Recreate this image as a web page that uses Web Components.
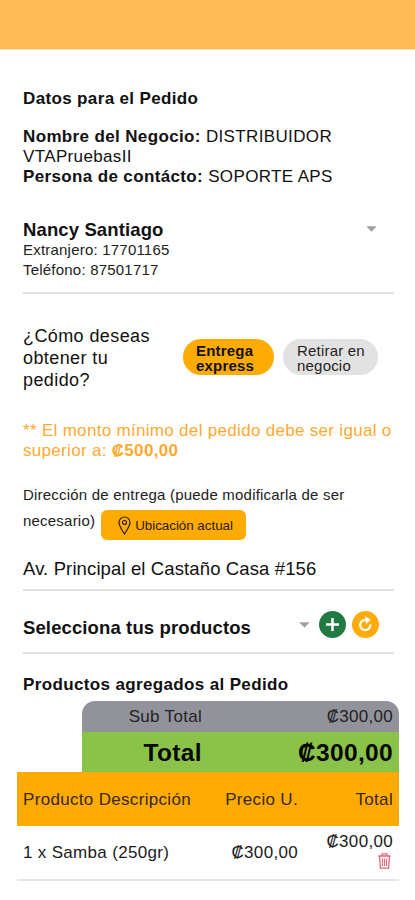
<!DOCTYPE html>
<html lang="es"><head><meta charset="utf-8"><title>Pedido</title>
<style>
html,body{margin:0;background:#fff}
body{font-family:"Liberation Sans",Arial,sans-serif;color:#111}
</style></head><body>
<order-page></order-page>
<script>
const define = (name, html) => {
  const t = document.createElement('template');
  t.innerHTML = html;
  customElements.define(name, class extends HTMLElement {
    constructor() {
      super();
      this.attachShadow({ mode: 'open' }).append(t.content.cloneNode(true));
    }
  });
};

define('top-bar', `<style>:host{display:block;height:49px;background:#ffbc56;border-bottom:1px solid #fbe3c0}</style>`);

define('text-line', `<style>
:host{display:block;white-space:nowrap;font-size:17px;line-height:20px;letter-spacing:.36px}
:host([bold]){font-weight:700}
:host([small]){font-size:15px;letter-spacing:.21px;color:#222}
:host([large]){font-size:18.5px;line-height:21px;letter-spacing:.12px}
</style><slot></slot>`);

define('caret-down', `<style>:host{display:block;width:11px;height:6px}svg{display:block}</style>
<svg width="11" height="6" viewBox="0 0 11 6"><path d="M.3 .2h10.4L5.5 5.7z" fill="#a0a0a0"/></svg>`);

define('field-row', `<style>
:host{display:block;border-bottom:2px solid #e1e1e1;width:371px;box-sizing:border-box}
</style><slot></slot>`);

define('option-chip', `<style>
:host{display:block;box-sizing:border-box;height:36px;border-radius:18px;padding:4px 0 0 14px;background:#e2e2e2;color:#222;
font-size:15px;line-height:15.3px;letter-spacing:.2px;width:95px;white-space:nowrap}
:host([selected]){background:#ffab05;color:#111;font-weight:700;width:91px;padding-left:13px}
</style><slot></slot>`);

define('location-button', `<style>
:host{display:flex;box-sizing:border-box;width:145px;height:30px;border-radius:6px;background:#ffab05;padding:1px 0 0 17px;
align-items:center;gap:4px;font-size:13.4px;letter-spacing:-.03px;color:#2a1d05;white-space:nowrap}
svg{flex:none}
</style>
<svg width="13" height="19" viewBox="0 0 13 19" fill="none" stroke="#2a1d05" stroke-width="1.2"><path d="M6.5 18C4.7 14.9 1 10.200 1 6.500a5.500 5.500 0 0 1 11 0C12 10.200 8.300 14.900 6.500 18z"/><circle cx="6.500" cy="6.500" r="2"/></svg>
<slot></slot>`);

define('round-button', `<style>
:host{display:block;width:27px;height:27px;border-radius:50%;background:#217a43}
:host([refresh]){background:#ffab0a}
svg{display:none}
:host([add]) .add,:host([refresh]) .refresh{display:block}
</style>
<svg class="add" width="27" height="27" viewBox="0 0 27 27"><path d="M13.500 7v13M7 13.500h13" stroke="#fff" stroke-width="2.500"/></svg>
<svg class="refresh" width="27" height="27" viewBox="0 0 27 27"><path d="M18.300 14.200A5.100 5.100 0 1 1 13.800 9" fill="none" stroke="#fff" stroke-width="2.100" stroke-linecap="round"/><path d="M13 5l5.600 4.100-4.700 4z" fill="#fff"/></svg>`);

define('trash-icon', `<style>:host{display:block;width:13px;height:16px}svg{display:block}</style>
<svg width="13" height="16" viewBox="0 0 13 16" fill="none" stroke="#e5677a"><path d="M.3 3h12.400M4 2.700V.8h5v1.900M1.600 3.500l.8 11.700h8.200l.8-11.700" stroke-width="1.300"/><path d="M4.500 5.500v7.500M6.500 5.500v7.500M8.500 5.500v7.500" stroke-width="1.100"/></svg>`);

define('totals-box', `<style>
:host{display:block;margin:6px 0 0 65px;border-radius:13px 13px 0 0;overflow:hidden}
div{display:grid;grid-template-columns:120px 1fr;text-align:right;box-sizing:border-box;padding-right:6px;white-space:nowrap}
.sub{height:31px;background:#92929b;font-size:17px;line-height:31px;letter-spacing:.3px;color:#222}
.total{height:40px;background:#8bc34a;font-size:24.5px;line-height:41px;font-weight:700;letter-spacing:.35px;color:#080808}
</style>
<div class="sub"><slot name="sub-label"></slot><slot name="sub-value"></slot></div>
<div class="total"><slot name="total-label"></slot><slot name="total-value"></slot></div>`);

define('product-row', `<style>
:host{display:grid;grid-template-columns:1fr 101px 95px;box-sizing:border-box;height:55px;padding:0 6px;align-items:center;
font-size:17px;line-height:20px;letter-spacing:.32px;white-space:nowrap;border-bottom:2px solid #e4e4e4;color:#1b1b1b}
:host([head]){background:#ffab05;height:54px;border:0;padding-top:1px;color:#3a2806}
.n{text-align:right}
.last{display:flex;flex-direction:column;align-items:flex-end}
</style><slot name="name"></slot><div class="n"><slot name="price"></slot></div><div class="n last"><slot name="total"></slot><slot name="action"></slot></div>`);

define('order-page', `<style>
:host{display:block}
main{padding:39px 0 0 23px}
.business{margin-top:18px}
.client{margin-top:32px;height:73px;display:grid;grid-template-columns:343px 1fr;align-items:start}
.client caret-down{margin-top:7px}
.delivery{display:flex;margin-top:31px;height:66px}
.question{width:160px;font-size:18px;line-height:22px;letter-spacing:.4px;white-space:nowrap}
.chips{display:flex;gap:9px;padding-top:14px}
.minimum{margin-top:30px;color:#fdaa32}
.minimum text-line{letter-spacing:.31px}
.address-label{margin-top:21px}
.address-label text-line{line-height:26px}
.current{display:flex;height:32px;gap:6px;align-items:flex-start}
.current location-button{margin-top:2px}
.address{margin-top:18px}
.address text-line{line-height:22px;padding-bottom:9px}
.select{display:flex;height:61px;align-items:center;padding-top:6px;box-sizing:border-box}
.select text-line{width:276px;padding-top:5px}
.select caret-down{margin-right:9px}
.select round-button+round-button{margin-left:6px}
.added{margin-top:21px}
.table{width:382px;margin-left:-6px}
trash-icon{margin:1px 2px 5px 0}
b{font-weight:700}
</style>
<top-bar></top-bar>
<main>
  <text-line bold>Datos para el Pedido</text-line>
  <div class="business">
    <text-line><b>Nombre del Negocio:</b> DISTRIBUIDOR</text-line>
    <text-line>VTAPruebasII</text-line>
    <text-line><b>Persona de contácto:</b> SOPORTE APS</text-line>
  </div>
  <field-row>
    <div class="client">
      <div>
        <text-line large bold>Nancy Santiago</text-line>
        <text-line small>Extranjero: 17701165</text-line>
        <text-line small>Teléfono: 87501717</text-line>
      </div>
      <caret-down></caret-down>
    </div>
  </field-row>
  <div class="delivery">
    <div class="question">¿Cómo deseas<br>obtener tu<br>pedido?</div>
    <div class="chips">
      <option-chip selected>Entrega<br>express</option-chip>
      <option-chip>Retirar en<br>negocio</option-chip>
    </div>
  </div>
  <div class="minimum">
    <text-line>** El monto mínimo del pedido debe ser igual o</text-line>
    <text-line>superior a: <b>₡500,00</b></text-line>
  </div>
  <div class="address-label">
    <text-line small>Dirección de entrega (puede modificarla de ser</text-line>
    <div class="current"><text-line small>necesario)</text-line><location-button>Ubicación actual</location-button></div>
  </div>
  <field-row class="address"><text-line large>Av. Principal el Castaño Casa #156</text-line></field-row>
  <field-row>
    <div class="select">
      <text-line large bold>Selecciona tus productos</text-line>
      <caret-down></caret-down>
      <round-button add></round-button>
      <round-button refresh></round-button>
    </div>
  </field-row>
  <text-line bold class="added">Productos agregados al Pedido</text-line>
  <div class="table">
    <totals-box>
      <span slot="sub-label">Sub Total</span><span slot="sub-value">₡300,00</span>
      <span slot="total-label">Total</span><span slot="total-value">₡300,00</span>
    </totals-box>
    <product-row head><span slot="name">Producto Descripción</span><span slot="price">Precio U.</span><span slot="total">Total</span></product-row>
    <product-row><span slot="name">1 x Samba (250gr)</span><span slot="price">₡300,00</span><span slot="total">₡300,00</span><trash-icon slot="action"></trash-icon></product-row>
  </div>
</main>`);
</script>
</body></html>
